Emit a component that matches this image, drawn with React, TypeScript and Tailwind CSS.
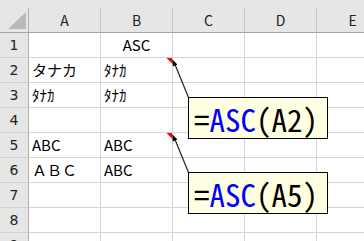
import React from "react";

const cols = ["A", "B", "C", "D", "E"];

type Row = { n: number; a?: string; b?: string; bCenter?: boolean };

const rows: Row[] = [
  { n: 1, b: "ASC", bCenter: true },
  { n: 2, a: "タナカ", b: "ﾀﾅｶ" },
  { n: 3, a: "ﾀﾅｶ", b: "ﾀﾅｶ" },
  { n: 4 },
  { n: 5, a: "ABC", b: "ABC" },
  { n: 6, a: "ＡＢＣ", b: "ABC" },
  { n: 7 },
  { n: 8 },
  { n: 9 },
];

function Comment({ top, arg }: { top: string; arg: string }) {
  return (
    <div
      className={`absolute left-[188px] ${top} w-[140px] h-[42px] border border-black bg-[#ffffe1] flex items-center pl-[5px] pt-[1px]`}
    >
      <span className="block whitespace-nowrap text-[31px] leading-[36px] font-['Noto_Sans_CJK_JP',sans-serif] [font-feature-settings:'hwid'] text-black">
        =<span className="text-[#0000ff]">ASC</span>({arg})
      </span>
    </div>
  );
}

export default function App() {
  return (
    <div className="relative w-[364px] h-[241px] overflow-hidden bg-white font-['Noto_Sans_CJK_JP',sans-serif] text-black">
      {/* column header */}
      <div className="flex flex-col h-[33px] bg-[#e6e6e6] border-b border-[#a6a6a6]">
        <div className="h-[8px]" />
        <div className="flex h-[24px]">
          <div className="relative w-[29px] shrink-0 border-r border-[#b0b0b0]">
            <svg width="29" height="24" className="absolute left-0 top-0">
              <polygon points="8,21 26,21 26,4" fill="#b9b9b9" />
            </svg>
          </div>
          {cols.map((c) => (
            <div
              key={c}
              className="w-[72px] shrink-0 border-r border-[#c8c8c8] flex items-center justify-center text-[14px] text-[#222]"
            >
              {c}
            </div>
          ))}
        </div>
      </div>

      {/* rows */}
      {rows.map((r) => (
        <div key={r.n} className="flex h-[25px]">
          <div className="w-[29px] shrink-0 bg-[#e6e6e6] border-r border-b border-r-[#b0b0b0] border-b-[#cfcfcf] flex items-center justify-center text-[14px] text-[#222] font-['DejaVu_Sans',sans-serif]">
            {r.n}
          </div>
          <div className="w-[72px] shrink-0 border-r border-b border-[#d4d4d4] flex items-center pl-[3px] text-[15px] whitespace-nowrap">
            {r.a}
          </div>
          <div
            className={`w-[72px] shrink-0 border-r border-b border-[#d4d4d4] flex items-center text-[15px] whitespace-nowrap ${
              r.bCenter ? "justify-center" : "pl-[3px]"
            }`}
          >
            {r.b}
          </div>
          <div className="w-[72px] shrink-0 border-r border-b border-[#d4d4d4]" />
          <div className="w-[72px] shrink-0 border-r border-b border-[#d4d4d4]" />
          <div className="w-[72px] shrink-0 border-r border-b border-[#d4d4d4]" />
        </div>
      ))}

      {/* comment indicators and connectors */}
      <svg
        width="364"
        height="241"
        className="absolute left-0 top-0 pointer-events-none"
      >
        {[0, 75].map((dy) => (
          <g key={dy} transform={`translate(0 ${dy})`}>
            <polygon points="166.5,58 172,58 172,63.5" fill="#ff0000" />
            <line x1="175" y1="64.5" x2="188.5" y2="97.5" stroke="#222" strokeWidth="1.2" />
            <polygon points="172.2,59.2 172.8,66.4 177.4,64.6" fill="#000" />
          </g>
        ))}
      </svg>

      <Comment top="top-[97px]" arg="A2" />
      <Comment top="top-[172px]" arg="A5" />
    </div>
  );
}
